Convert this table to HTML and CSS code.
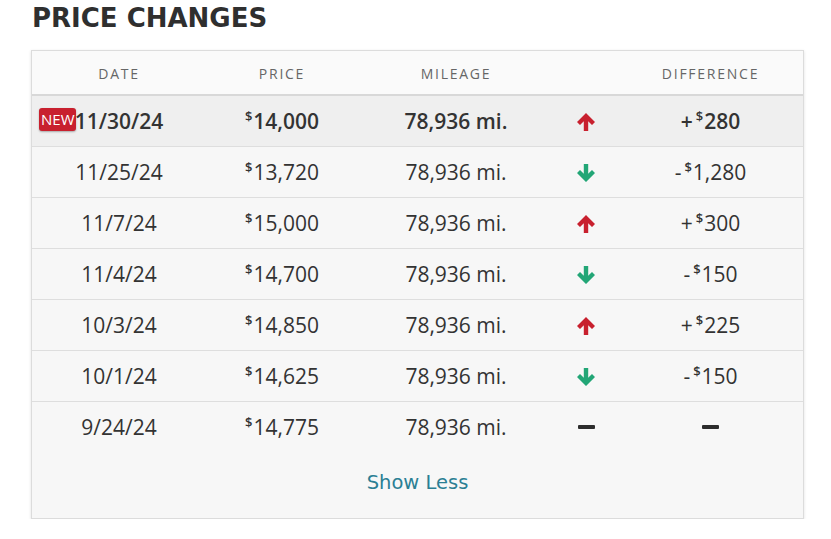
FILE: index.html
```html
<!DOCTYPE html>
<html>
<head>
<meta charset="utf-8">
<link rel="stylesheet" href="styles.css">
</head>
<body>
<div class="wrap">
  <h2 class="title">PRICE CHANGES</h2>
  <div class="card">
    <div class="row head">
      <div>Date</div><div>Price</div><div>Mileage</div><div></div><div>Difference</div>
    </div>
    <div class="row latest">
      <div class="date"><span class="badge">NEW</span>11/30/24</div>
      <div><sup>$</sup>14,000</div>
      <div>78,936 mi.</div>
      <div><svg class="arrow up" viewBox="0 0 20 20"><path d="M10 1 L19 10 L16 13 L12.2 9.2 V19 H7.8 V9.2 L4 13 L1 10 Z"/></svg></div>
      <div><span class="sign">+</span><sup>$</sup>280</div>
    </div>
    <div class="row">
      <div>11/25/24</div>
      <div><sup>$</sup>13,720</div>
      <div>78,936 mi.</div>
      <div><svg class="arrow down" viewBox="0 0 20 20"><path d="M10 19 L19 10 L16 7 L12.2 10.8 V1 H7.8 V10.8 L4 7 L1 10 Z"/></svg></div>
      <div><span class="sign">-</span><sup>$</sup>1,280</div>
    </div>
    <div class="row">
      <div>11/7/24</div>
      <div><sup>$</sup>15,000</div>
      <div>78,936 mi.</div>
      <div><svg class="arrow up" viewBox="0 0 20 20"><path d="M10 1 L19 10 L16 13 L12.2 9.2 V19 H7.8 V9.2 L4 13 L1 10 Z"/></svg></div>
      <div><span class="sign">+</span><sup>$</sup>300</div>
    </div>
    <div class="row">
      <div>11/4/24</div>
      <div><sup>$</sup>14,700</div>
      <div>78,936 mi.</div>
      <div><svg class="arrow down" viewBox="0 0 20 20"><path d="M10 19 L19 10 L16 7 L12.2 10.8 V1 H7.8 V10.8 L4 7 L1 10 Z"/></svg></div>
      <div><span class="sign">-</span><sup>$</sup>150</div>
    </div>
    <div class="row">
      <div>10/3/24</div>
      <div><sup>$</sup>14,850</div>
      <div>78,936 mi.</div>
      <div><svg class="arrow up" viewBox="0 0 20 20"><path d="M10 1 L19 10 L16 13 L12.2 9.2 V19 H7.8 V9.2 L4 13 L1 10 Z"/></svg></div>
      <div><span class="sign">+</span><sup>$</sup>225</div>
    </div>
    <div class="row">
      <div>10/1/24</div>
      <div><sup>$</sup>14,625</div>
      <div>78,936 mi.</div>
      <div><svg class="arrow down" viewBox="0 0 20 20"><path d="M10 19 L19 10 L16 7 L12.2 10.8 V1 H7.8 V10.8 L4 7 L1 10 Z"/></svg></div>
      <div><span class="sign">-</span><sup>$</sup>150</div>
    </div>
    <div class="row last">
      <div>9/24/24</div>
      <div><sup>$</sup>14,775</div>
      <div>78,936 mi.</div>
      <div><span class="dash"></span></div>
      <div><span class="dash"></span></div>
    </div>
    <div class="more"><a href="#">Show Less</a></div>
  </div>
</div>
</body>
</html>
```

FILE: styles.css
```css
html, body {
  margin: 0;
  padding: 0;
  background: #ffffff;
}
.wrap {
  padding: 0 27px 0 31px;
  font-family: "Open Sans", "Liberation Sans", sans-serif;
  color: #333333;
}
.title {
  margin: 0;
  padding: 2px 0 0 1px;
  height: 48px;
  font-family: "DejaVu Sans", sans-serif;
  font-weight: 700;
  font-size: 26px;
  line-height: 32px;
  color: #2f2f2f;
}
.card {
  border: 1px solid #dcdcdc;
  background: #f7f7f7;
  box-shadow: 0 1px 3px rgba(0,0,0,0.12);
}
.row {
  display: grid;
  grid-template-columns: 174px 152px 196px 64px 1fr;
  height: 50px;
  border-bottom: 1px solid #dedede;
  align-items: center;
  font-size: 21px;
  text-align: center;
}
.row > div {
  position: relative;
}
.row.head {
  background: #fafafa;
  height: 42px;
  padding-top: 1px;
  border-bottom: 2px solid #d8d8d8;
  font-size: 14px;
  letter-spacing: 1.75px;
  text-transform: uppercase;
  color: #666666;
}
.row.latest {
  background: #efefef;
  font-weight: 600;
}
.row.last {
  border-bottom: none;
}
.sign {
  margin-right: 3px;
}
sup {
  font-size: 13px;
  font-weight: 600;
  vertical-align: 0;
  position: relative;
  top: -8px;
  margin-right: 1px;
}
.badge {
  position: absolute;
  left: 7px;
  top: 1px;
  background: #c8202e;
  color: #ffffff;
  font-size: 15px;
  font-weight: 400;
  line-height: 23px;
  padding: 0 2px;
  border-radius: 3px;
  box-shadow: 0 1px 2px rgba(0,0,0,0.3);
}
.arrow {
  width: 20px;
  height: 20px;
  display: block;
  margin: 2px auto 0;
}
.arrow.up { fill: #c8202e; }
.arrow.down { fill: #22a676; }
.dash {
  display: block;
  width: 17px;
  height: 4px;
  border-radius: 1px;
  background: #2d2d2d;
  margin: 0 auto;
}
.more {
  height: 60px;
  padding-bottom: 6px;
  display: flex;
  align-items: center;
  justify-content: center;
}
.more a {
  font-family: "DejaVu Sans", sans-serif;
  font-size: 19.5px;
  color: #2b7f94;
  text-decoration: none;
}
```
